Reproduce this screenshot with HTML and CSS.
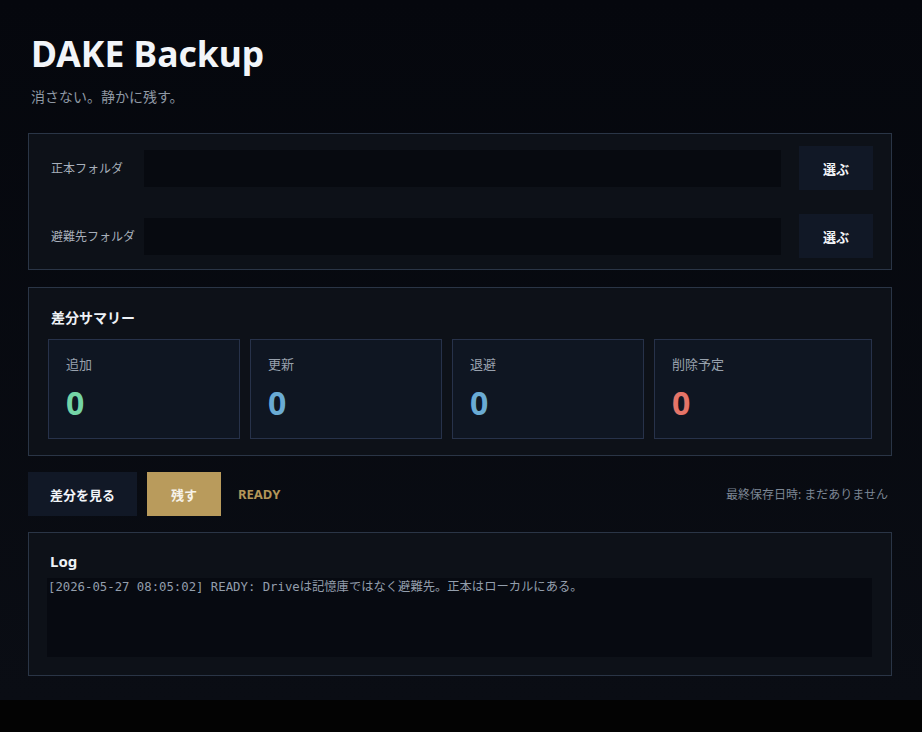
FILE: index.html
```html
<!DOCTYPE html>
<html lang="ja">
	<head>
		<meta charset="utf-8" />
		<title>DAKE Backup</title>
		<meta name="viewport" content="width=device-width, initial-scale=1.0">
		<link rel="stylesheet" href="styles.css">
	</head>
	<body>
		<div id="main">
			<div class="header">
				<h1>DAKE Backup</h1>
				<p class="tagline">消さない。静かに残す。</p>
			</div>

			<div class="panel folders">
				<div class="row">
					<label for="src">正本フォルダ</label>
					<input id="src" type="text" />
					<div class="btn">選ぶ</div>
				</div>
				<div class="row">
					<label for="dst">避難先フォルダ</label>
					<input id="dst" type="text" />
					<div class="btn">選ぶ</div>
				</div>
			</div>

			<div class="panel summary">
				<h2>差分サマリー</h2>
				<div class="cards">
					<div class="card">
						<div class="card-label">追加</div>
						<div class="card-num add">0</div>
					</div>
					<div class="card">
						<div class="card-label">更新</div>
						<div class="card-num upd">0</div>
					</div>
					<div class="card">
						<div class="card-label">退避</div>
						<div class="card-num upd">0</div>
					</div>
					<div class="card">
						<div class="card-label">削除予定</div>
						<div class="card-num del">0</div>
					</div>
				</div>
			</div>

			<div class="actions">
				<div id="diff" class="btn">差分を見る</div>
				<div id="keep" class="btn gold">残す</div>
				<span class="status">READY</span>
				<span class="saved">最終保存日時: まだありません</span>
			</div>

			<div class="panel log">
				<h2>Log</h2>
				<pre id="logArea">[2026-05-27 08:05:02] READY: Driveは記憶庫ではなく避難先。正本はローカルにある。</pre>
			</div>
		</div>
	</body>
</html>
```

FILE: styles.css
```css
html {
	background:#030303;
}
body {
	margin:0;
	padding:0;
	font-family:"Noto Sans", "Noto Sans CJK JP", sans-serif;
	color:#e6ebf2;
	background:linear-gradient(180deg, #05070d 0%, #0a0d14 100%);
}
#main {
	padding:33px 30px 24px 28px;
}
.header {
	padding-left:3px;
}
h1 {
	margin:0;
	font-size:35.5px;
	line-height:41px;
	font-weight:bold;
	color:#f2f5f9;
}
.tagline {
	margin:12px 0 26px 0;
	font-size:14px;
	line-height:21px;
	color:#8f98a4;
}
.panel {
	background:#0d1118;
	border:1px solid #2a3546;
	margin-bottom:17px;
}
h2 {
	margin:0;
	padding-left:3px;
	font-size:14px;
	line-height:20px;
	font-weight:bold;
	color:#eef2f6;
}

/* folders */
.folders {
	padding:12px 18px 11px 22px;
}
.row {
	display:flex;
	align-items:center;
	height:44px;
}
.row + .row {
	margin-top:24px;
}
.row label {
	width:93px;
	flex:none;
	font-size:12px;
	color:#a8b0bb;
}
.row input {
	flex:1;
	height:37px;
	margin:0 18px 0 0;
	padding:0 10px;
	box-sizing:border-box;
	border:none;
	background:#070a10;
	color:#cfd6df;
}
.btn {
	display:flex;
	align-items:center;
	justify-content:center;
	height:44px;
	padding:0 24px;
	background:#111826;
	color:#f1f4f8;
	font-size:13px;
	font-weight:bold;
	cursor:pointer;
}

/* summary */
.summary {
	padding:20px 19px 16px 19px;
	margin-bottom:16px;
}
.cards {
	display:flex;
	gap:10px;
	margin-top:11px;
}
.card {
	flex:1 1 auto;
	padding:15px 17px 16px 17px;
	background:#0f1622;
	border:1px solid #27324a;
}
.card-label {
	font-size:13px;
	line-height:18px;
	color:#98a1ad;
}
.card-num {
	margin-top:11px;
	font-size:32px;
	line-height:38px;
	font-weight:bold;
}
.add { color:#74d4a6; }
.upd { color:#6aabd4; }
.del { color:#e57468; }

/* actions */
.actions {
	display:flex;
	align-items:center;
	gap:10px;
	margin-bottom:16px;
}
#diff {
	padding:0 22px;
}
.gold {
	background:#b99b5c;
	color:#f7f3ea;
}
.status {
	padding-left:7px;
	font-size:13px;
	font-weight:bold;
	color:#b39658;
}
.saved {
	margin-left:auto;
	margin-right:4px;
	font-size:12px;
	color:#7c8694;
}

/* log */
.log {
	padding:18px 19px 18px 18px;
	margin-bottom:0;
}
.log h2 {
	font-size:15px;
}
#logArea {
	margin:7px 0 0 0;
	height:79px;
	padding:0 1px;
	box-sizing:border-box;
	background:#070a11;
	font-family:"DejaVu Sans Mono", "Noto Sans CJK JP", monospace;
	font-size:12.3px;
	line-height:18px;
	color:#939eac;
	white-space:pre-wrap;
}
```
